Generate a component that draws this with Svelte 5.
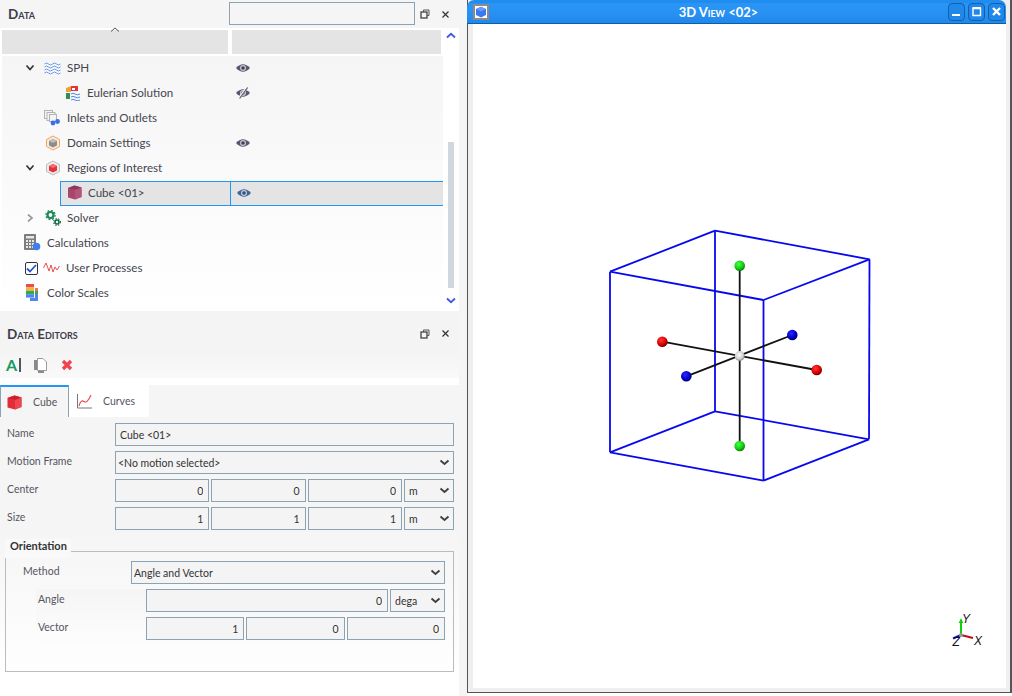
<script>
	const rows = [
		{ label: 'SPH', indent: 65, arrow: 'open', icon: 'sph', eye: 'on' },
		{ label: 'Eulerian Solution', indent: 85, icon: 'euler', eye: 'off' },
		{ label: 'Inlets and Outlets', indent: 65, icon: 'inlets' },
		{ label: 'Domain Settings', indent: 65, icon: 'domain', eye: 'on' },
		{ label: 'Regions of Interest', indent: 65, arrow: 'open', icon: 'regions' },
		{ label: 'Cube <01>', indent: 27, icon: 'cube', eye: 'on', selected: true },
		{ label: 'Solver', indent: 65, arrow: 'closed', icon: 'solver' },
		{ label: 'Calculations', indent: 45, icon: 'calc' },
		{ label: 'User Processes', indent: 64, icon: 'user', check: true },
		{ label: 'Color Scales', indent: 45, icon: 'scales' }
	];

	// cube corners as measured from the view
	const c = {
		lt: [610, 271.7], ft: [763.5, 300], rt: [869.5, 259.3], bt: [715, 230.7],
		lb: [610, 452.3], fb: [763.5, 480.7], rb: [869, 439.3], bb: [715, 411.3]
	};
	const edges = [
		['lt', 'ft'], ['ft', 'rt'], ['rt', 'bt'], ['bt', 'lt'],
		['lb', 'fb'], ['fb', 'rb'], ['rb', 'bb'], ['bb', 'lb'],
		['lt', 'lb'], ['ft', 'fb'], ['rt', 'rb'], ['bt', 'bb']
	];
	const center = [739.7, 356];
	const handles = [
		{ x: 739.7, y: 265.7, fill: 'url(#green)' },
		{ x: 739.7, y: 446, fill: 'url(#green)' },
		{ x: 662.3, y: 341.7, fill: 'url(#red)' },
		{ x: 816.7, y: 370, fill: 'url(#red)' },
		{ x: 792.3, y: 335, fill: 'url(#blue)' },
		{ x: 686.3, y: 376.3, fill: 'url(#blue)' }
	];
</script>

{#snippet chevron()}
	<svg class="chev" width="11" height="7" viewBox="0 0 11 7"><path d="M1.5 1.5 5.5 5 9.5 1.5" fill="none" stroke="#3a3f44" stroke-width="1.8" /></svg>
{/snippet}

{#snippet floatBtns()}
	<div class="dock-btns">
		<svg width="10" height="10" viewBox="0 0 10 10"><rect x="1" y="3" width="6" height="6" fill="none" stroke="#333" stroke-width="1.2" /><path d="M3.5 3V1H9V6.5H7" fill="none" stroke="#555" /></svg>
		<svg width="9" height="9" viewBox="0 0 9 9"><path d="M1.5 1.5 7.5 7.5M7.5 1.5 1.5 7.5" stroke="#333" stroke-width="1.2" /></svg>
	</div>
{/snippet}

{#snippet eye(kind, selected)}
	<svg width="16" height="12" viewBox="0 0 16 12">
		<path d="M1 6Q8 -1.5 15 6Q8 13.5 1 6Z" fill={selected ? '#3d669f' : '#5b5670'} />
		<circle cx="8" cy="6" r="3" fill="#c9c9d2" />
		<circle cx="8" cy="6" r="1.8" fill={selected ? '#33507c' : '#44424f'} />
		{#if kind === 'off'}
			<path d="M12 .5 4 11.5" stroke="#f7f7f7" stroke-width="2.4" />
			<path d="M12.6 .5 4.6 11.5" stroke="#55535f" stroke-width="1.2" />
		{/if}
	</svg>
{/snippet}

{#snippet icon(name)}
	{#if name === 'sph'}
		<svg width="17" height="14" viewBox="0 0 17 14" fill="none" stroke="#6c9bf2" stroke-width="1">
			{#each [2, 5, 8, 11] as y}
				<path d="M.5 {y + 1}q2-2 4 0t4 0 4 0 4 0" />
			{/each}
		</svg>
	{:else if name === 'euler'}
		<svg width="16" height="16" viewBox="0 0 16 16">
			<path d="M1 3 6 1V7H1Z" fill="#e8a33c" /><path d="M6 1h7v5H6Z" fill="#e4323a" />
			<path d="M1 8h4v6H1Z" fill="#2f8f4e" /><rect x="7" y="3" width="3" height="2" fill="#fff" />
			<path d="M6 9q2-1.500 4 0t5 0M6 12q2-1.500 4 0t5 0M6 15q2-1.500 4 0t5 0" fill="none" stroke="#4f86ea" />
		</svg>
	{:else if name === 'inlets'}
		<svg width="17" height="16" viewBox="0 0 17 16">
			<g fill="#f4f4f4" stroke="#b3b3b3"><rect x=".5" y=".5" width="8" height="8" /><rect x="3" y="2.500" width="8" height="8" /><rect x="5.500" y="4.500" width="7" height="7" /></g>
			<circle cx="9" cy="13" r="2.400" fill="#3c6fe0" /><circle cx="13.500" cy="11.500" r="2.400" fill="#3c6fe0" />
		</svg>
	{:else if name === 'domain'}
		<svg width="16" height="16" viewBox="0 0 16 16">
			<path d="M8 1 14.500 4.500V11.500L8 15 1.500 11.500V4.500Z" fill="#fbeadb" stroke="#f0a45d" />
			<path d="M8 4 12 6V10.500L8 12.500 4 10.500V6Z" fill="#8d8d8d" /><path d="M8 4 12 6 8 8 4 6Z" fill="#bdbdbd" />
		</svg>
	{:else if name === 'regions'}
		<svg width="16" height="16" viewBox="0 0 16 16">
			<path d="M8 1 14.500 4.500V11.500L8 15 1.500 11.500V4.500Z" fill="#ececec" stroke="#bcbcbc" />
			<path d="M8 4 12 6V10.500L8 12.500 4 10.500V6Z" fill="#e7303c" /><path d="M8 4 12 6 8 8 4 6Z" fill="#f56b73" />
		</svg>
	{:else if name === 'cube'}
		<svg width="15" height="15" viewBox="0 0 15 15">
			<path d="M1 3 7.500 .5 14.500 2.500V12L8 14.500 1 12.500Z" fill="#a8466c" />
			<path d="M1 3 7.500 .5 14.500 2.500 8 5Z" fill="#8c3a5c" /><path d="M8 5 14.500 2.500V12L8 14.500Z" fill="#b5547a" />
		</svg>
	{:else if name === 'solver'}
		<svg width="16" height="16" viewBox="0 0 16 16">
			<circle cx="5.500" cy="5" r="3" fill="none" stroke="#1c8a55" stroke-width="2.200" />
			<circle cx="5.500" cy="5" r="4.600" fill="none" stroke="#1c8a55" stroke-width="1.300" stroke-dasharray="1.800 1.800" />
			<circle cx="12" cy="12" r="2" fill="none" stroke="#126b42" stroke-width="1.600" />
			<circle cx="12" cy="12" r="3.400" fill="none" stroke="#126b42" stroke-width="1.100" stroke-dasharray="1.400 1.400" />
		</svg>
	{:else if name === 'calc'}
		<svg width="17" height="17" viewBox="0 0 17 17">
			<rect x="0" y="0" width="12" height="16" rx="1" fill="#7d7d7d" /><rect x="2" y="2" width="8" height="2.500" fill="#e8e8e8" />
			{#each [6, 9, 12] as y}
				{#each [2, 5, 8] as x}
					<rect {x} {y} width="2" height="2" fill="#e8e8e8" />
				{/each}
			{/each}
			<circle cx="12.500" cy="12.500" r="3.800" fill="#3f7df0" />
		</svg>
	{:else if name === 'user'}
		<svg width="17" height="13" viewBox="0 0 17 13"><path d="M.5 7 3 2 6 10 8 4 10 11 12 6 14 9 16.500 5" fill="none" stroke="#e8504f" stroke-width="1" /></svg>
	{:else if name === 'scales'}
		<svg width="13" height="17" viewBox="0 0 13 17" class="scales">
			<rect width="8" height="3.400" x="0" y="0" fill="#ee4d45" /><rect width="8" height="3.400" x="0" y="3.400" fill="#f6b23e" />
			<rect width="8" height="3.400" x="0" y="6.800" fill="#34a853" /><rect width="8" height="3.400" x="0" y="10.200" fill="#4f86ea" />
			<rect width="3" height="3" x="9" y="4" fill="#ee7a45" /><rect width="3" height="3" x="9" y="7" fill="#34a853" />
			<rect width="3" height="4" x="9" y="10" fill="#4f86ea" /><rect width="8" height="3" x="4" y="14" fill="#4f86ea" />
		</svg>
	{/if}
{/snippet}

<div class="app">
	<aside class="left">
		<header class="dock-head">
			<h2>Data</h2>
			<input class="search" type="text" />
			{@render floatBtns()}
		</header>

		<div class="tree-wrap">
			<div class="tree">
				<div class="heads">
					<div class="head-cell first">
						<svg width="10" height="5" viewBox="0 0 10 5"><path d="M1 4.500 5 1 9 4.500" fill="none" stroke="#555" /></svg>
					</div>
					<div class="head-cell"></div>
				</div>
				<div class="rows">
					{#each rows as r}
						<div class="row" class:selected={r.selected}>
							<div class="name" style="padding-left:{r.indent}px">
								{#if r.arrow}
									<svg class="twisty" width="10" height="8" viewBox="0 0 10 8">
										{#if r.arrow === 'open'}
											<path d="M1.500 1.500 5 5.500 8.500 1.500" fill="none" stroke="#333" stroke-width="1.700" />
										{:else}
											<path d="M3 .5 7 4 3 7.500" fill="none" stroke="#999" stroke-width="1.700" />
										{/if}
									</svg>
								{/if}
								{#if r.check}
									<span class="check">
										<svg width="11" height="9" viewBox="0 0 11 9"><path d="M1 4.500 4 7.500 10 1" fill="none" stroke="#2c55c8" stroke-width="1.800" /></svg>
									</span>
								{/if}
								<span class="tree-icon">{@render icon(r.icon)}</span>
								<span class="label">{r.label}</span>
							</div>
							<div class="vis">
								{#if r.eye}
									{@render eye(r.eye, r.selected)}
								{/if}
							</div>
						</div>
					{/each}
				</div>
			</div>
			<div class="scrollbar">
				<svg width="10" height="7" viewBox="0 0 10 7"><path d="M1 5.500 5 1.800 9 5.500" fill="none" stroke="#3b5bdb" stroke-width="1.800" /></svg>
				<div class="track"><div class="thumb"></div></div>
				<svg width="10" height="7" viewBox="0 0 10 7"><path d="M1 1.500 5 5.200 9 1.500" fill="none" stroke="#3b5bdb" stroke-width="1.800" /></svg>
			</div>
		</div>

		<section class="editors">
			<header class="dock-head second">
				<h2>Data Editors</h2>
				{@render floatBtns()}
			</header>
			<div class="toolbar">
				<span class="rename">A</span>
				<svg width="13" height="15" viewBox="0 0 13 15">
					<path d="M0 2H4V15H10V12H0Z" fill="#8a8a8a" /><path d="M3.500 .5H9L12.500 4V12.500H3.500Z" fill="#fff" stroke="#9a9a9a" />
				</svg>
				<svg width="12" height="12" viewBox="0 0 12 12"><path d="M2 2 10 10M10 2 2 10" stroke="#f4414d" stroke-width="3.200" /></svg>
			</div>
			<div class="tabs">
				<div class="tab active">
					<svg width="15" height="15" viewBox="0 0 15 15">
						<path d="M.5 3 7.500 .5 14.500 2.500V12L8 14.500 .5 12.500Z" fill="#e32c38" /><path d="M.5 3 7.500 .5 14.500 2.500 8 5Z" fill="#c9202c" /><path d="M8 5 14.500 2.500V12L8 14.500Z" fill="#ee4650" />
					</svg>
					<span>Cube</span>
				</div>
				<div class="tab">
					<svg width="16" height="15" viewBox="0 0 16 15">
						<path d="M.5 0V14H15" fill="none" stroke="#777" />
						<path d="M2 12Q4 5 7 7.500T14 1" fill="none" stroke="#ee4650" stroke-width="1.100" />
					</svg>
					<span>Curves</span>
				</div>
			</div>

			<div class="form">
				<div class="field">
					<span class="fl">Name</span>
					<input class="text" type="text" value="Cube <01>" />
				</div>
				<div class="field">
					<span class="fl">Motion Frame</span>
					<div class="sel grow"><select><option>&lt;No motion selected&gt;</option></select>{@render chevron()}</div>
				</div>
				<div class="field">
					<span class="fl">Center</span>
					<input class="num" value="0" /><input class="num" value="0" /><input class="num" value="0" />
					<div class="sel unit"><select><option>m</option></select>{@render chevron()}</div>
				</div>
				<div class="field">
					<span class="fl">Size</span>
					<input class="num" value="1" /><input class="num" value="1" /><input class="num" value="1" />
					<div class="sel unit"><select><option>m</option></select>{@render chevron()}</div>
				</div>

				<div class="group">
					<span class="legend">Orientation</span>
					<div class="field">
						<span class="gl">Method</span>
						<div class="sel grow"><select><option>Angle and Vector</option></select>{@render chevron()}</div>
					</div>
					<div class="sub">
						<div class="field">
							<span class="sl">Angle</span>
							<input class="num" value="0" />
							<div class="sel unit small"><select><option>dega</option></select>{@render chevron()}</div>
						</div>
						<div class="field">
							<span class="sl">Vector</span>
							<input class="num" value="1" /><input class="num" value="0" /><input class="num" value="0" />
						</div>
					</div>
				</div>
			</div>
		</section>
	</aside>

	<main class="window">
		<div class="titlebar">
			<span class="win-icon">
				<svg width="12" height="12" viewBox="0 0 12 12">
					<path d="M1 3 6 .8 11 3V9L6 11.500 1 9Z" fill="#3a78f2" /><path d="M1 3 6 .8 11 3 6 5.500Z" fill="#6a9cf8" />
				</svg>
			</span>
			<span class="win-title">3D View &lt;02&gt;</span>
			<div class="win-btns">
				<button aria-label="Minimize"><svg width="11" height="11" viewBox="0 0 11 11"><rect x="1" y="8" width="8" height="2" fill="#fff" /></svg></button>
				<button aria-label="Maximize"><svg width="11" height="11" viewBox="0 0 11 11"><path d="M2 2.500H9.500V9.500H2Z" fill="none" stroke="#fff" stroke-width="1.400" /><rect x="1.500" y="1" width="8.500" height="2" fill="#fff" /></svg></button>
				<button aria-label="Close"><svg width="11" height="11" viewBox="0 0 11 11"><path d="M2 2 9 9M9 2 2 9" stroke="#fff" stroke-width="2.400" /></svg></button>
			</div>
		</div>
		<div class="view-frame">
			<!-- viewBox uses page coordinates so the measured points can go in as they are -->
			<svg class="scene" viewBox="473 24 533 664" width="533" height="664">
				<defs>
					<radialGradient id="green" cx=".4" cy=".35" r=".7"><stop offset="0" stop-color="#4dff4d" /><stop offset=".6" stop-color="#0fd00f" /><stop offset="1" stop-color="#0a6a0a" /></radialGradient>
					<radialGradient id="red" cx=".4" cy=".35" r=".7"><stop offset="0" stop-color="#ff3a3a" /><stop offset=".6" stop-color="#e00000" /><stop offset="1" stop-color="#5a0000" /></radialGradient>
					<radialGradient id="blue" cx=".4" cy=".35" r=".7"><stop offset="0" stop-color="#2a2aff" /><stop offset=".6" stop-color="#0000cc" /><stop offset="1" stop-color="#00005a" /></radialGradient>
					<radialGradient id="white" cx=".45" cy=".4" r=".7"><stop offset="0" stop-color="#fff" /><stop offset=".55" stop-color="#d0d0d0" /><stop offset="1" stop-color="#666" /></radialGradient>
				</defs>
				{#each edges as [a, b]}
					<line x1={c[a][0]} y1={c[a][1]} x2={c[b][0]} y2={c[b][1]} stroke="#0808f0" stroke-width="1.800" />
				{/each}
				<line x1="739.700" y1="265.700" x2="739.700" y2="446" stroke="#111" stroke-width="1.800" />
				<line x1="662.300" y1="341.700" x2="816.700" y2="370" stroke="#111" stroke-width="1.800" />
				<line x1="792.300" y1="335" x2="686.300" y2="376.300" stroke="#111" stroke-width="1.800" />
				{#each handles as h}
					<circle cx={h.x} cy={h.y} r="5.300" fill={h.fill} />
				{/each}
				<circle cx={center[0]} cy={center[1]} r="5" fill="url(#white)" />

				<line x1="961" y1="635" x2="961" y2="621" stroke="#0fd00f" stroke-width="2" />
				<path d="M961 618 958.700 623H963.300Z" fill="#0fd00f" />
				<line x1="961" y1="635" x2="973" y2="638" stroke="#c01010" stroke-width="2" />
				<line x1="961" y1="635" x2="953" y2="638.500" stroke="#0a0ad0" stroke-width="2" />
				<circle cx="961" cy="635" r="2" fill="#999" />
				<g class="axis">
					<text x="962" y="623">Y</text>
					<text x="974" y="645">X</text>
					<text x="952.500" y="646">Z</text>
				</g>
			</svg>
		</div>
	</main>
</div>

<style>
	:global(body) {
		margin: 0;
		background: #fff;
	}

	.app {
		display: flex;
		width: 1012px;
		height: 696px;
		overflow: hidden;
		font-family: 'Lato', 'Noto Sans', sans-serif;
		font-size: 11.600px;
		color: #45454f;
	}

	.left {
		width: 467px;
		flex: none;
		background: #f5f5f5;
		display: flex;
		flex-direction: column;
	}

	.dock-head {
		height: 28px;
		flex: none;
		display: flex;
		align-items: center;
		width: 459px;
		box-sizing: border-box;
		padding-left: 8px;
	}

	.dock-head h2 {
		margin: 0;
		flex: 1;
		font-size: 13.500px;
		font-weight: 700;
		font-variant: small-caps;
		color: #3c3c4a;
	}

	.search {
		width: 186px;
		height: 23px;
		margin: -1px 5px 0 0;
		box-sizing: border-box;
		border: 1px solid #8ba3b3;
		background: #f5f5f5;
		padding: 0;
	}

	.dock-btns {
		width: 39px;
		flex: none;
		display: flex;
		align-items: center;
		gap: 11px;
		box-sizing: border-box;
	}

	.tree-wrap {
		width: 459px;
		height: 283px;
		flex: none;
		display: flex;
		background: #fff;
		padding-left: 2px;
		box-sizing: border-box;
	}

	.tree {
		width: 441px;
		flex: none;
		padding-top: 2px;
		box-sizing: border-box;
		display: flex;
		flex-direction: column;
	}

	.heads {
		display: flex;
		gap: 4px;
		height: 24px;
		flex: none;
		margin-right: 2px;
	}

	.head-cell {
		flex: 1;
		background: #e4e4e4;
		display: flex;
		justify-content: center;
	}

	.head-cell.first {
		flex: none;
		width: 226px;
	}

	.head-cell svg {
		margin-top: -3px;
	}

	.rows {
		flex: 1;
		margin-top: 2px;
		background: linear-gradient(#f5f5f5, #fff);
	}

	.row {
		height: 25px;
		display: flex;
	}

	.name {
		width: 228px;
		flex: none;
		position: relative;
		display: flex;
		align-items: center;
		box-sizing: border-box;
		padding-bottom: 2px;
	}

	.tree-icon {
		display: flex;
		align-items: center;
		width: 0;
		justify-content: flex-end;
		margin-left: -6px;
		margin-right: 6px;
	}

	.tree-icon :global(svg) {
		flex: none;
	}

	.tree-icon :global(.scales) {
		margin-right: 2px;
	}

	.label {
		white-space: nowrap;
	}

	.twisty {
		position: absolute;
		left: 23px;
		top: 8px;
	}

	.check {
		position: absolute;
		left: 23px;
		top: 6px;
		width: 13px;
		height: 13px;
		box-sizing: border-box;
		border: 1px solid #333;
		border-radius: 2px;
		background: #fff;
		display: flex;
		align-items: center;
		justify-content: center;
	}

	.vis {
		flex: 1;
		display: flex;
		align-items: center;
		padding: 0 0 1px 5px;
	}

	.row.selected {
		margin-left: 58px;
		background: #e4e4e4;
		border: 1px solid #2196f3;
		border-right: none;
		box-sizing: border-box;
	}

	.row.selected .name {
		width: 170px;
		border-right: 1px solid #2196f3;
	}

	.row.selected .vis {
		padding-left: 5px;
	}

	.scrollbar {
		width: 16px;
		flex: none;
		display: flex;
		flex-direction: column;
		align-items: center;
		padding: 4px 0 7px;
		box-sizing: border-box;
	}

	.scrollbar svg {
		margin-left: -1px;
	}

	.track {
		flex: 1;
		width: 6px;
		padding-top: 103px;
		padding-bottom: 9px;
		box-sizing: border-box;
		margin-left: -1px;
	}

	.thumb {
		height: 100%;
		background: #cfd8dc;
	}

	.editors {
		flex: 1;
		width: 459px;
		display: flex;
		flex-direction: column;
	}

	.dock-head.second {
		height: 39px;
		padding: 6px 0 0 7px;
		background: #f4f4f4;
	}

	.dock-head.second h2 {
		padding-top: 1px;
	}

	.toolbar {
		height: 28px;
		flex: none;
		display: flex;
		align-items: center;
		padding: 2px 0 0 6px;
		box-sizing: border-box;
		gap: 14px;
		background: linear-gradient(#f4f4f4, #f9f9f9);
	}

	.rename {
		width: 15px;
		font-size: 16px;
		font-weight: 700;
		line-height: 16px;
		color: #179a63;
		border-right: 2px solid #555;
		box-sizing: border-box;
		margin-right: -1px;
		height: 14px;
		display: flex;
		align-items: center;
	}

	.tabs {
		padding-top: 7px;
		height: 39px;
		box-sizing: border-box;
		flex: none;
		display: flex;
		background: linear-gradient(#fff 7px, #f5f5f5 7px);
	}

	.tab {
		display: flex;
		align-items: center;
		box-sizing: border-box;
		width: 80px;
		height: 33px;
		padding-left: 8px;
		gap: 10px;
		font-size: 10.500px;
		color: #55555f;
		border-bottom: 1px solid #8ba3b3;
		background: #fff;
	}

	.tab.active {
		width: 69px;
		border-top: 2px solid #2196f3;
		border-left: 1px solid #8ba3b3;
		border-right: 1px solid #8ba3b3;
		border-bottom: none;
		background: #f5f5f5;
		padding: 0 0 1px 6px;
		gap: 11px;
	}

	.form {
		flex: 1;
		background: linear-gradient(#f5f5f5 40%, #fff 95%);
		padding: 6px 5px 0 0;
		box-sizing: border-box;
		display: flex;
		flex-direction: column;
		gap: 5px;
	}

	.field {
		display: flex;
		height: 23px;
		gap: 2px;
		align-items: stretch;
		flex: none;
	}

	.fl,
	.gl,
	.sl {
		flex: none;
		box-sizing: border-box;
		font-size: 10.500px;
		color: #55555f;
		line-height: 20px;
		margin-right: -2px;
	}

	.fl {
		width: 115px;
		padding-left: 7px;
	}

	.gl {
		width: 125px;
		padding-left: 17px;
	}

	.sl {
		width: 110px;
		padding-left: 2px;
	}

	input {
		font-family: inherit;
		outline: none;
	}

	.text,
	.num {
		box-sizing: border-box;
		border: 1px solid #8ba3b3;
		background: #f4f4f4;
		font-size: 10.500px;
		color: #333;
		min-width: 0;
		flex: 1;
		width: 0;
	}

	.text {
		padding: 0 4px;
	}

	.num {
		text-align: right;
		padding: 0 5px 0 3px;
	}

	.grow {
		flex: 1;
	}

	.sel {
		position: relative;
		display: flex;
	}

	.sel select {
		appearance: none;
		width: 100%;
		box-sizing: border-box;
		border: 1px solid #8ba3b3;
		border-radius: 0;
		background: #f4f4f4;
		font-family: inherit;
		font-size: 10.500px;
		color: #333;
		padding: 0 0 0 2px;
		outline: none;
	}

	.sel :global(.chev) {
		position: absolute;
		right: 4px;
		top: 8px;
	}

	.unit {
		width: 50px;
		flex: none;
	}

	.unit select {
		padding-left: 4px;
	}

	.unit.small {
		width: 55px;
	}

	.group {
		margin: 16px 0 0 5px;
		padding: 9px 8px 0 0;
		border: 1px solid #b8bdc0;
		height: 121px;
		box-sizing: border-box;
		display: flex;
		flex-direction: column;
		gap: 5px;
		flex: none;
		position: relative;
	}

	/* sits over the group's top left border, as the line only starts after the text */
	.legend {
		position: absolute;
		left: -1px;
		top: -13px;
		width: 66px;
		height: 19px;
		box-sizing: border-box;
		padding-left: 5px;
		background: #f9f9f9;
		font-size: 11px;
		font-weight: 700;
		color: #333;
		line-height: 13px;
	}

	.sub {
		margin-left: 30px;
		display: flex;
		flex-direction: column;
		gap: 5px;
		padding-bottom: 7px;
		background: linear-gradient(#f5f5f5, #fdfdfd);
	}

	.window {
		width: 545px;
		height: 693px;
		flex: none;
		display: flex;
		flex-direction: column;
		box-sizing: border-box;
		border: 1px solid #555;
		border-top: none;
		border-right-width: 2px;
		background: #efefef;
	}

	.titlebar {
		height: 24px;
		flex: none;
		margin: 0 4px 0 -1px;
		display: flex;
		align-items: center;
		background: linear-gradient(#1f8df0 0 12%, #2a94f5 12% 40%, #2088ea);
		border-radius: 7px 7px 0 0;
		border-bottom: 1px solid #0d5ea8;
		box-sizing: border-box;
		padding-left: 6px;
	}

	.win-icon {
		width: 16px;
		height: 16px;
		box-sizing: border-box;
		border: 2px solid #8a8a8a;
		background: #fff;
		display: flex;
		align-items: center;
		justify-content: center;
	}

	.win-title {
		flex: 1;
		text-align: center;
		color: #fff;
		font-size: 13px;
		font-weight: 700;
		font-variant: small-caps;
	}

	.win-btns {
		display: flex;
		gap: 3px;
		padding-right: 1px;
	}

	.win-btns button {
		width: 17px;
		height: 18px;
		padding: 0;
		background: #2088ea;
		border: 1px solid #155fa8;
		border-radius: 4px;
		display: flex;
		align-items: center;
		justify-content: center;
	}

	.view-frame {
		flex: 1;
		margin: 0 4px 4px 5px;
		background: #fff;
		min-height: 0;
	}

	.scene {
		display: block;
	}

	.axis text {
		font-family: 'Liberation Sans', sans-serif;
		font-size: 12px;
		font-style: italic;
		fill: #111;
	}
</style>
